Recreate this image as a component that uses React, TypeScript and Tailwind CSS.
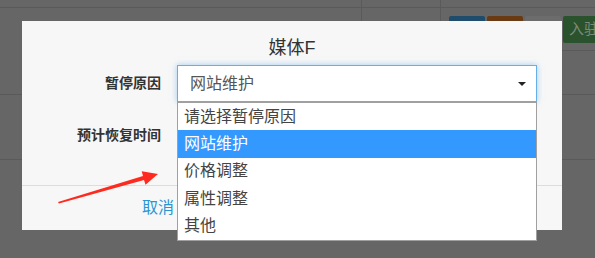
import React from "react";

const reasons = ["请选择暂停原因", "网站维护", "价格调整", "属性调整", "其他"];

const App: React.FC = () => {
  const selected = 1;

  return (
    <div className="relative h-[258px] w-[595px] overflow-hidden bg-[#666666] font-['Liberation_Sans','Noto_Sans_CJK_SC',sans-serif]">
      {/* page behind the overlay */}
      <div className="flex flex-col">
        <div className="flex h-[8px] border-b border-[#5a5a5a]">
          <div className="w-[362px] border-r border-[#5a5a5a]" />
          <div className="w-[79px] border-r border-[#5a5a5a]" />
        </div>
        <div className="relative flex h-[87px] border-b border-[#5a5a5a]">
          <div className="w-[362px] border-r border-[#5a5a5a]" />
          <div className="w-[79px] border-r border-[#5a5a5a]" />
          <div className="flex flex-1 flex-col">
            <div className="h-[43px] border-b border-[#5a5a5a]" />
          </div>
          <div className="absolute left-[449px] top-[8px] flex gap-[2px]">
            <div className="h-[27px] w-[36px] rounded-[2px] bg-[#1e4c6a]" />
            <div className="h-[27px] w-[36px] rounded-[2px] bg-[#6a3a12]" />
            <div className="h-[27px] w-[36px] rounded-[2px] bg-[#6c6c6c]" />
            <div className="flex h-[27px] w-[80px] shrink-0 items-center whitespace-nowrap rounded-[2px] bg-[#2a522c] pl-[6px] text-[15px] text-[#7a8a7a]">
              入驻审核
            </div>
          </div>
        </div>
        <div className="h-[65px] border-b border-[#5a5a5a]" />
      </div>

      {/* modal */}
      <div className="absolute left-[22px] top-[21px] flex h-[209px] w-[540px] flex-col bg-[#f7f7f7]">
        <div className="pt-[17px] text-center text-[18px] leading-[20px] text-[#333]">媒体F</div>
        <div className="mt-[7px] flex items-center">
          <div className="w-[139px] text-right text-[14px] font-bold text-[#333]">暂停原因</div>
          <div className="ml-[16px] flex h-[37px] w-[360px] items-center justify-between border border-[#66afe9] bg-white pl-[12px] pr-[10px] text-[16px] text-[#555] shadow-[0_0_6px_rgba(102,175,233,0.6)]">
            <span>网站维护</span>
            <span className="h-0 w-0 border-x-[4px] border-t-[4px] border-x-transparent border-t-[#222]" />
          </div>
        </div>
        <div className="mt-[15px] flex h-[37px] items-center">
          <div className="w-[139px] text-right text-[14px] font-bold text-[#333]">预计恢复时间</div>
        </div>
        <div className="mt-auto flex h-[45px] items-center border-t border-[#dddddd] pl-[120px]">
          <span className="text-[16px] text-[#2a95d5]">取消</span>
        </div>
      </div>

      {/* open select list */}
      <div className="absolute left-[177px] top-[102px] flex w-[360px] flex-col border border-[#a0a0a0] bg-white text-[16px]">
        {reasons.map((r, i) => (
          <div
            key={r}
            className={
              i === selected
                ? "flex h-[27.4px] items-center bg-[#3399ff] pl-[6px] text-white"
                : "flex h-[27.4px] items-center pl-[6px] text-[#444]"
            }
          >
            {r}
          </div>
        ))}
      </div>

      {/* annotation arrow */}
      <svg className="absolute left-0 top-0" width="595" height="258" viewBox="0 0 595 258">
        <polygon
          points="58,202 143,176 141.7,171.3 158,174 145.5,184.7 144,180 59,203.5"
          fill="#ff2a1f"
        />
      </svg>
    </div>
  );
};

export default App;
